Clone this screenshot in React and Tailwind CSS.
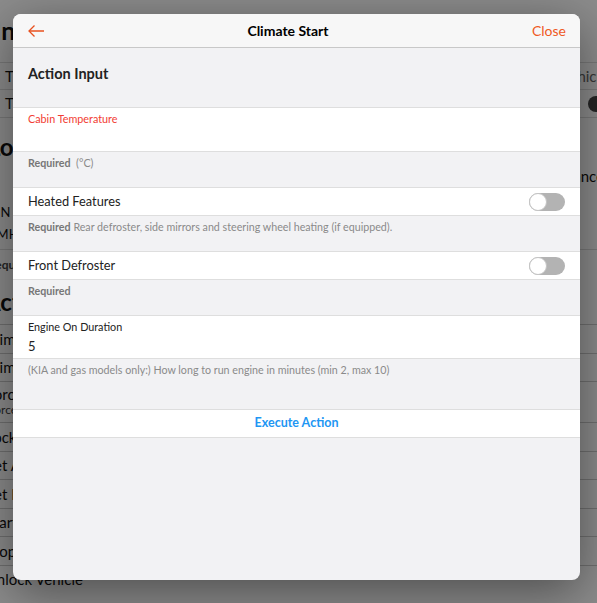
import React from "react";

const font = { fontFamily: "Lato, 'Open Sans', sans-serif" };

function Toggle() {
  return (
    <div className="relative h-[18px] w-[36px] rounded-full bg-[#b3b3b3]">
      <div className="absolute left-0 top-0 h-[18px] w-[18px] rounded-full border border-[#c4c4c4] bg-white" />
    </div>
  );
}

function BackgroundPage() {
  const actions = [
    "Climate Start",
    "Climate Stop",
    null,
    "Lock Vehicle",
    "Set Alarm",
    "Set Defrost",
    "Start Charge",
    "Stop Charge",
    "Unlock Vehicle",
  ];
  return (
    <div className="h-[603px] w-full overflow-hidden bg-white text-[#111]" style={font}>
      <div className="-ml-[12px] w-[640px]">
        <div className="flex h-[62px] items-center pl-[6px] text-[25px] font-bold">
          <span>Info</span>
        </div>
        <div className="flex h-[27px] items-center justify-between border-t border-[#ddd] pl-[17px] pr-[20px] text-[15px]">
          <span>The vehicle name</span>
          <span className="text-[#666]">Vehicle</span>
        </div>
        <div className="flex h-[28px] items-center justify-between border-t border-[#ddd] pl-[17px] pr-[24px] text-[15px]">
          <span>The identifier</span>
          <span className="h-[16px] w-[16px] rounded-full bg-[#444]" />
        </div>
        <div className="flex h-[60px] items-end justify-between border-t border-[#ddd] pb-[12px] pr-[24px]">
          <span className="text-[24px] font-bold">Location</span>
          <span className="mb-[-22px] text-[15px]">Balance</span>
        </div>
        <div className="h-[20px]" />
        <div className="flex flex-col pt-[4px] text-[13px] leading-[22px]">
          <span>VIN</span>
          <span>KMH00000000000000</span>
        </div>
        <div className="mt-[4px] flex h-[30px] items-center border-t border-[#ddd] text-[12px] font-bold text-[#444]">
          Required
        </div>
        <div className="flex h-[45px] items-center text-[24px] font-bold">
          <span className="-ml-[4px]">Actions</span>
        </div>
        {actions.map((a, i) =>
          a === null ? (
            <div key={i} className="flex h-[41px] flex-col justify-center border-t border-[#ccc] text-[15px] leading-[16px]">
              <span className="-ml-[2px]">Force Refresh</span>
              <span className="text-[12px] text-[#444]">Force refresh data</span>
            </div>
          ) : (
            <div key={i} className="flex h-[28.5px] items-center border-t border-[#ccc] text-[15px]">
              <span className="-ml-[2px]">{a}</span>
            </div>
          )
        )}
      </div>
    </div>
  );
}

function FieldNote({ children, className = "" }) {
  return (
    <div className={`px-[15px] pt-[3px] text-[10.7px] text-[#8a8a8a] ${className}`}>{children}</div>
  );
}

export default function App() {
  return (
    <div className="relative h-[603px] w-[597px] overflow-hidden">
      <BackgroundPage />
      {/* dimmed backdrop with the dialog on top */}
      <div className="absolute inset-0 bg-black/45">
        <div
          className="ml-[13px] mt-[14px] flex h-[566px] w-[567px] flex-col overflow-hidden rounded-[8px] bg-[#f2f2f4] shadow-[0_12px_50px_rgba(0,0,0,0.45)]"
          style={font}
        >
          {/* header */}
          <div className="flex h-[34px] shrink-0 items-center justify-between border-b border-[#c8c8c8] bg-[#f7f7f7] pl-[15px] pr-[14px]">
            <svg width="16" height="12" viewBox="0 0 16 12" fill="none" stroke="#e8501e" strokeWidth="1.3" className="mt-[1px]">
              <line x1="1" y1="6" x2="16" y2="6" />
              <polyline points="6.5,0.5 1,6 6.5,11.5" />
            </svg>
            <span className="text-[14px] font-bold text-black">Climate Start</span>
            <span className="text-[14px] text-[#ef5a24]">Close</span>
          </div>

          {/* section title */}
          <div className="flex h-[59px] shrink-0 items-center px-[15px] pb-[8px] text-[14.5px] font-bold text-[#222]">
            Action Input
          </div>

          {/* cabin temperature */}
          <div className="h-[45px] shrink-0 border-y border-[#dedede] bg-white px-[15px] pt-[3px] text-[10.8px] text-[#f23c33]">
            Cabin Temperature
          </div>
          <FieldNote className="h-[35px]">
            <span className="font-bold text-[#777]">Required</span>&nbsp; (°C)
          </FieldNote>

          {/* heated features */}
          <div className="flex h-[29px] shrink-0 items-center justify-between border-y border-[#dedede] bg-white px-[15px] text-[12.8px] text-[#222]">
            <span>Heated Features</span>
            <Toggle />
          </div>
          <FieldNote className="h-[35px]">
            <span className="font-bold text-[#777]">Required</span> Rear defroster, side mirrors and steering wheel heating (if equipped).
          </FieldNote>

          {/* front defroster */}
          <div className="flex h-[29px] shrink-0 items-center justify-between border-y border-[#dedede] bg-white px-[15px] text-[12.8px] text-[#222]">
            <span>Front Defroster</span>
            <Toggle />
          </div>
          <FieldNote className="h-[35px]">
            <span className="font-bold text-[#777]">Required</span>
          </FieldNote>

          {/* engine duration */}
          <div className="flex h-[44px] shrink-0 flex-col border-y border-[#dedede] bg-white px-[15px] pt-[3px] text-[#222]">
            <span className="text-[10.8px] leading-[16px]">Engine On Duration</span>
            <span className="mt-[2px] text-[13px] leading-[18px]">5</span>
          </div>
          <FieldNote className="h-[50px]">
            (KIA and gas models only:) How long to run engine in minutes (min 2, max 10)
          </FieldNote>

          {/* submit */}
          <div className="flex h-[29px] shrink-0 items-center justify-center border-y border-[#dedede] bg-white text-[12.5px] font-bold text-[#2196f3]">
            Execute Action
          </div>
        </div>
      </div>
    </div>
  );
}
